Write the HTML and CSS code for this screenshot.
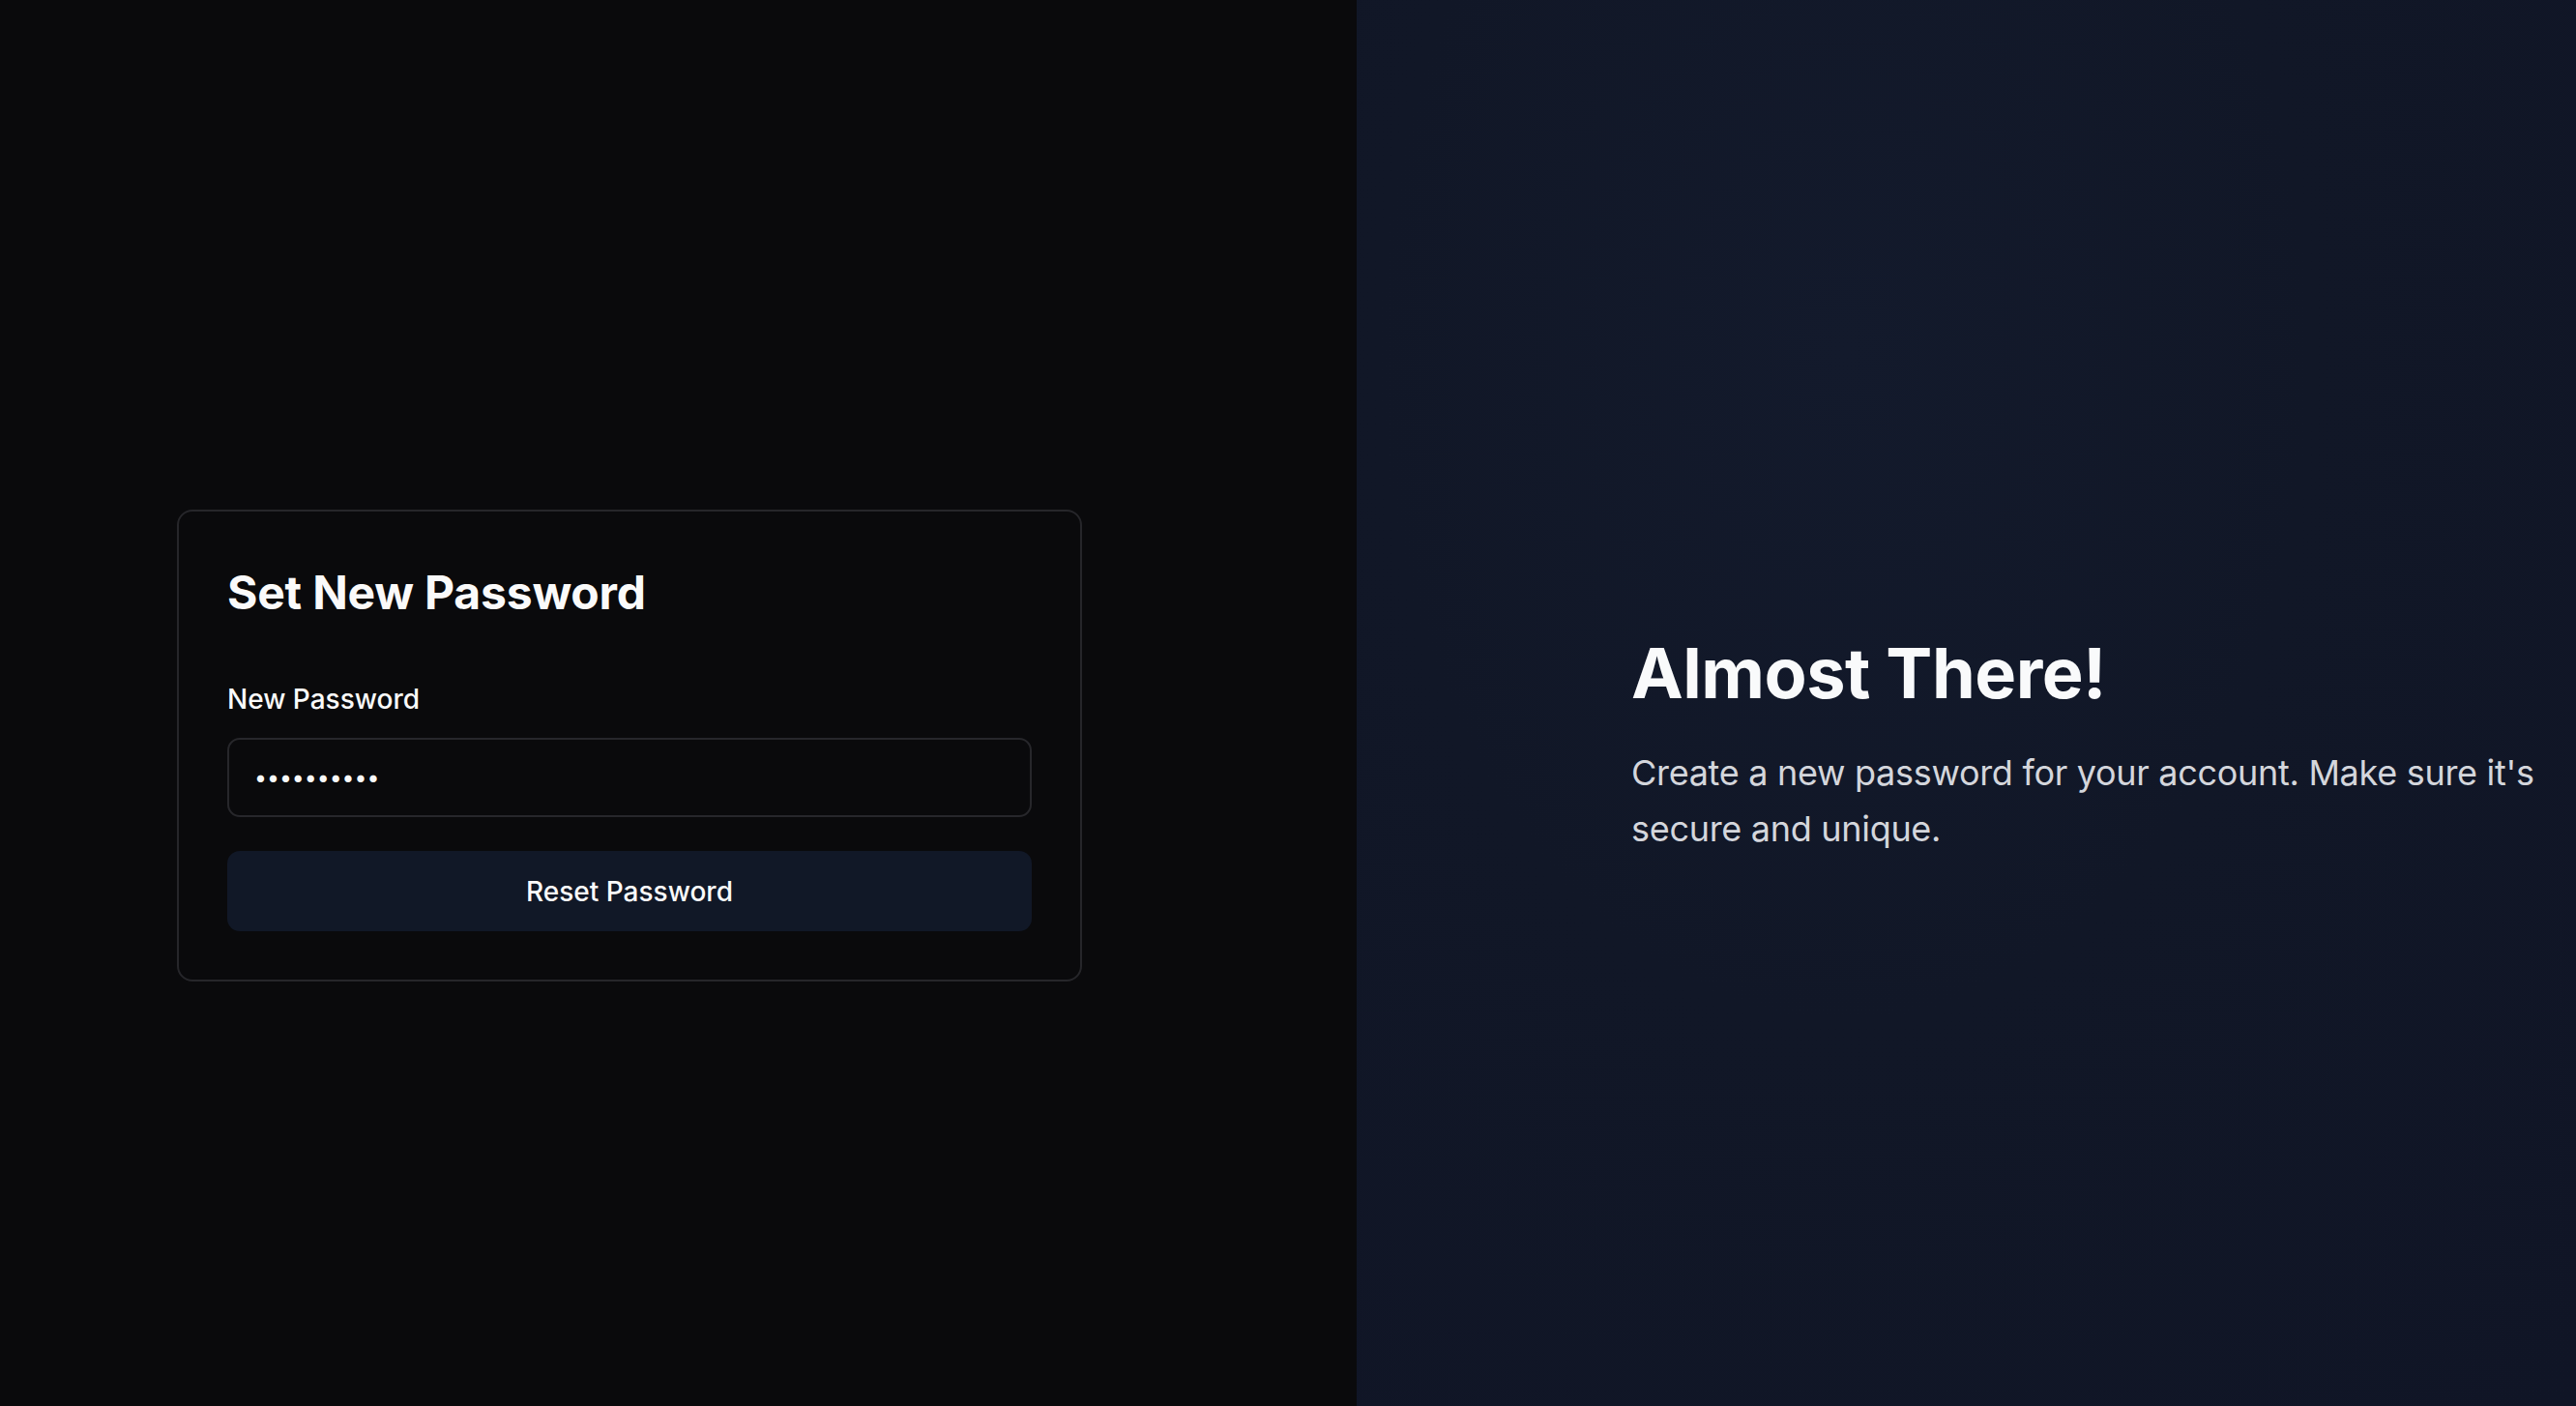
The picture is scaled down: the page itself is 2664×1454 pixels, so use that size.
FILE: index.html
```html
<!DOCTYPE html>
<html lang="en">
<head>
<meta charset="utf-8">
<title>Set New Password</title>
<link rel="stylesheet" href="styles.css">
</head>
<body>
<main class="page">
  <section class="left">
    <form class="card">
      <h1 class="card-title">Set New Password</h1>
      <label class="field-label" for="pw">New Password</label>
      <input class="field-input" id="pw" type="password" value="secret1234">
      <button class="btn" type="button">Reset Password</button>
    </form>
  </section>
  <section class="right">
    <div class="intro">
      <h2 class="intro-title">Almost There!</h2>
      <p class="intro-text">Create a new password for your account. Make sure it's secure and unique.</p>
    </div>
  </section>
</main>
</body>
</html>
```
FILE: styles.css
```css
* { box-sizing: border-box; }
html, body { margin: 0; padding: 0; }
body {
  font-family: "Inter", "Noto Sans", "Liberation Sans", sans-serif;
  background: #0a0a0c;
  color: #fafafa;
}
.page {
  display: flex;
  width: 2664px;
  height: 1454px;
}
.left {
  width: 1403px;
  flex: none;
  display: flex;
  align-items: center;
  padding: 88px 0 0 183px;
  background: #0a0a0c;
}
.card {
  width: 936px;
  border: 2px solid #26262a;
  border-radius: 16px;
  padding: 50px;
  display: flex;
  flex-direction: column;
  background: #0a0a0c;
}
.card-title {
  margin: 0 0 57px;
  font-size: 48px;
  line-height: 67px;
  font-weight: 700;
  letter-spacing: -0.2px;
  color: #fafafa;
}
.field-label {
  margin: 0 0 20px;
  font-size: 28px;
  line-height: 40px;
  font-weight: 500;
  color: #fafafa;
}
.field-input {
  height: 82px;
  width: 100%;
  border: 2px solid #27272b;
  border-radius: 13px;
  background: #0a0a0c;
  color: #fafafa;
  font-family: inherit;
  font-size: 23px;
  padding: 0 26px;
  margin: 0 0 35px;
  outline: none;
  letter-spacing: 0;
}
.btn {
  height: 83px;
  width: 100%;
  border: none;
  border-radius: 13px;
  background: #111827;
  color: #fafafa;
  font-family: inherit;
  font-size: 28px;
  font-weight: 500;
  cursor: pointer;
}
.right {
  flex: 1;
  display: flex;
  align-items: center;
  padding: 88px 0 0 284px;
  background: radial-gradient(ellipse at 40% 25%, #131a2c 0%, #111727 45%, #101526 100%);
}
.intro { width: 960px; }
.intro-title {
  margin: 0 0 34px;
  font-size: 72px;
  line-height: 80px;
  font-weight: 700;
  letter-spacing: -0.5px;
  color: #f9fafb;
}
.intro-text {
  margin: 0;
  font-size: 36px;
  line-height: 58.5px;
  font-weight: 400;
  letter-spacing: -0.3px;
  color: #d4d6dc;
}
```
